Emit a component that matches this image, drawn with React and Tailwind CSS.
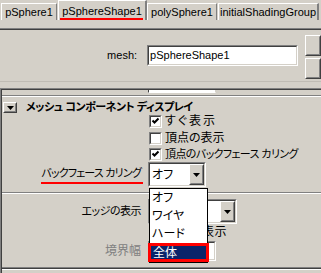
import React from 'react'

function Sunken({ className = '', inner = '', children }) {
  return (
    <div className={`border border-t-[#808080] border-l-[#808080] border-b-white border-r-white ${className}`}>
      <div className={`h-full w-full border border-t-[#404040] border-l-[#404040] border-b-[#d4d0c8] border-r-[#d4d0c8] bg-white ${inner}`}>
        {children}
      </div>
    </div>
  )
}

function Raised({ className = '', children }) {
  return (
    <div className={`border border-t-white border-l-white border-b-[#404040] border-r-[#404040] bg-[#d4d0c8] ${className}`}>
      <div className="flex h-full w-full items-center justify-center border border-transparent border-b-[#808080] border-r-[#808080]">
        {children}
      </div>
    </div>
  )
}

function Tri() {
  return (
    <svg width="7" height="4" viewBox="0 0 7 4">
      <path d="M0 0h7L3.5 4z" fill="#000" />
    </svg>
  )
}

function Check({ on, label, track = 'text-[12px]' }) {
  return (
    <div className="flex items-start">
      <Sunken className="h-[13px] w-[13px] shrink-0">
        {on && (
          <svg width="9" height="9" viewBox="0 0 9 9" className="block">
            <path d="M1.5 3.5l2 2 4-4" fill="none" stroke="#000" strokeWidth="2" />
          </svg>
        )}
      </Sunken>
      <span className={`ml-[3px] whitespace-nowrap leading-[13px] text-black ${track}`}>{label}</span>
    </div>
  )
}

function Combo({ value, className = '' }) {
  return (
    <Sunken className={`h-[25px] ${className}`} inner="flex items-center">
      <span className="flex-1 pl-[2px] text-[12px] leading-none">{value}</span>
      <Raised className="h-full w-[15px]">
        <Tri />
      </Raised>
    </Sunken>
  )
}

export default function App() {
  return (
    <div className="relative h-[273px] w-[321px] overflow-hidden bg-[#d4d0c8] font-['Liberation_Sans','Noto_Sans_CJK_JP',sans-serif] text-black [font-feature-settings:'palt']">
      {/* tabs */}
      <div className="flex h-[28px] items-start text-[11px]">
        <div className="ml-[1px] mt-[3px] flex h-[17px] w-[56px] items-center justify-center border-l border-t border-l-white border-t-white border-r border-r-[#808080]">
          pSphere1
        </div>
        <div className="relative ml-[1px] flex h-[20px] w-[89px] items-start justify-center border-l border-t border-l-white border-t-white border-r-2 border-r-[#808080] pt-[2px]">
          pSphereShape1
          <div className="absolute bottom-0 left-[1px] h-[2px] w-[83px] bg-[#ff0000]" />
        </div>
        <div className="mt-[3px] flex h-[17px] w-[70px] items-center justify-center border-l border-t border-l-white border-t-white border-r border-r-[#808080]">
          polySphere1
        </div>
        <div className="ml-[1px] mt-[3px] flex h-[17px] w-[101px] items-center justify-center border-l border-t border-l-white border-t-white border-r-2 border-r-[#808080]">
          initialShadingGroup
        </div>
      </div>
      <div className="h-px bg-[#808080]" />
      <div className="h-px bg-[#404040]" />

      {/* mesh row */}
      <div className="flex h-[51px] items-start">
        <div className="mt-[15px] flex h-[21px] w-[139px] items-center justify-end text-[11px]">mesh:</div>
        <Sunken className="ml-[10px] mt-[15px] h-[21px] w-[153px]" inner="flex items-center">
          <span className="pl-[1px] text-[11px] leading-none">pSphereShape1</span>
        </Sunken>
        <div className="ml-[7px] mt-[5px] flex flex-col gap-[2px]">
          <Raised className="h-[21px] w-[16px]" />
          <Raised className="h-[21px] w-[16px]" />
        </div>
      </div>
      <div className="h-px bg-[#c0bcb4]" />
      <div className="h-[6px]" />

      {/* scroll area */}
      <div className="border-l border-t border-[#808080]">
        <div className="border-l border-t border-[#404040]">
          <div className="ml-[146px] h-[3px] w-[68px] border-x border-b border-b-white border-l-[#404040] border-r-[#d4d0c8] bg-white" />
          <div className="h-[2px]" />
          <div className="h-px bg-[#808080]" />
          <div className="h-px bg-white" />

          {/* frame header */}
          <div className="flex h-[18px] items-start pt-[5px]">
            <Raised className="ml-[1px] h-[11px] w-[14px]">
              <Tri />
            </Raised>
            <span className="ml-[9px] whitespace-nowrap text-[11px] font-bold leading-[11px] tracking-[-0.5px]">
              メッシュ コンポーネント ディスプレイ
            </span>
          </div>

          <div className="h-[17px] pl-[147px]">
            <Check on label="すぐ表示" track="text-[12px] tracking-[2px]" />
          </div>
          <div className="h-[16px] pl-[147px]">
            <Check label="頂点の表示" />
          </div>
          <div className="h-[14px] pl-[147px]">
            <Check on label="頂点のバックフェース カリング" track="text-[11px] tracking-[-0.6px]" />
          </div>

          <div className="flex h-[24px] items-start">
            <div className="relative flex h-[24px] w-[139px] items-center justify-end whitespace-nowrap pb-[2px] text-[11px] tracking-[-0.8px]">
              バックフェース カリング
              <div className="absolute bottom-[2px] right-[-2px] h-[2px] w-[102px] bg-[#ff0000]" />
            </div>
            <Combo value="オフ" className="ml-[7px] w-[58px]" />
          </div>

          <div className="h-[6px]" />
          <div className="h-px bg-[#808080]" />
          <div className="h-px bg-white" />
          <div className="h-[5px]" />

          <div className="flex h-[25px] items-start">
            <div className="flex h-[24px] w-[139px] items-center justify-end whitespace-nowrap text-[11px] tracking-[-0.5px]">エッジの表示</div>
            <Combo value="ハード" className="ml-[7px] w-[89px]" />
          </div>

          <div className="flex h-[17px] items-center pl-[147px]">
            <Check label="境界の表示" track="text-[12px] tracking-[0.5px]" />
          </div>

          <div className="flex h-[20px] items-center">
            <div className="flex w-[139px] justify-end text-[12px] text-[#808080]">境界幅</div>
            <Sunken className="ml-[7px] h-[20px] w-[68px]" />
          </div>

          <div className="h-[6px]" />
          <div className="h-px bg-[#808080]" />
          <div className="h-px bg-[#404040]" />
          <div className="h-px bg-white" />
          <div className="h-[10px]" />
        </div>
      </div>

      {/* open dropdown list */}
      <div className="absolute left-[149px] top-[188px] w-[59px] border border-black bg-white text-[12px]">
        <div className="flex h-[18px] items-center pl-[2px]">オフ</div>
        <div className="flex h-[18px] items-center pl-[2px]">ワイヤ</div>
        <div className="flex h-[18px] items-center pl-[2px]">ハード</div>
        <div className="-mx-[2px] flex h-[19px] items-center border-[3px] border-[#ff0000] bg-[#0a246a] pl-[2px] text-white">
          全体
        </div>
      </div>
    </div>
  )
}
